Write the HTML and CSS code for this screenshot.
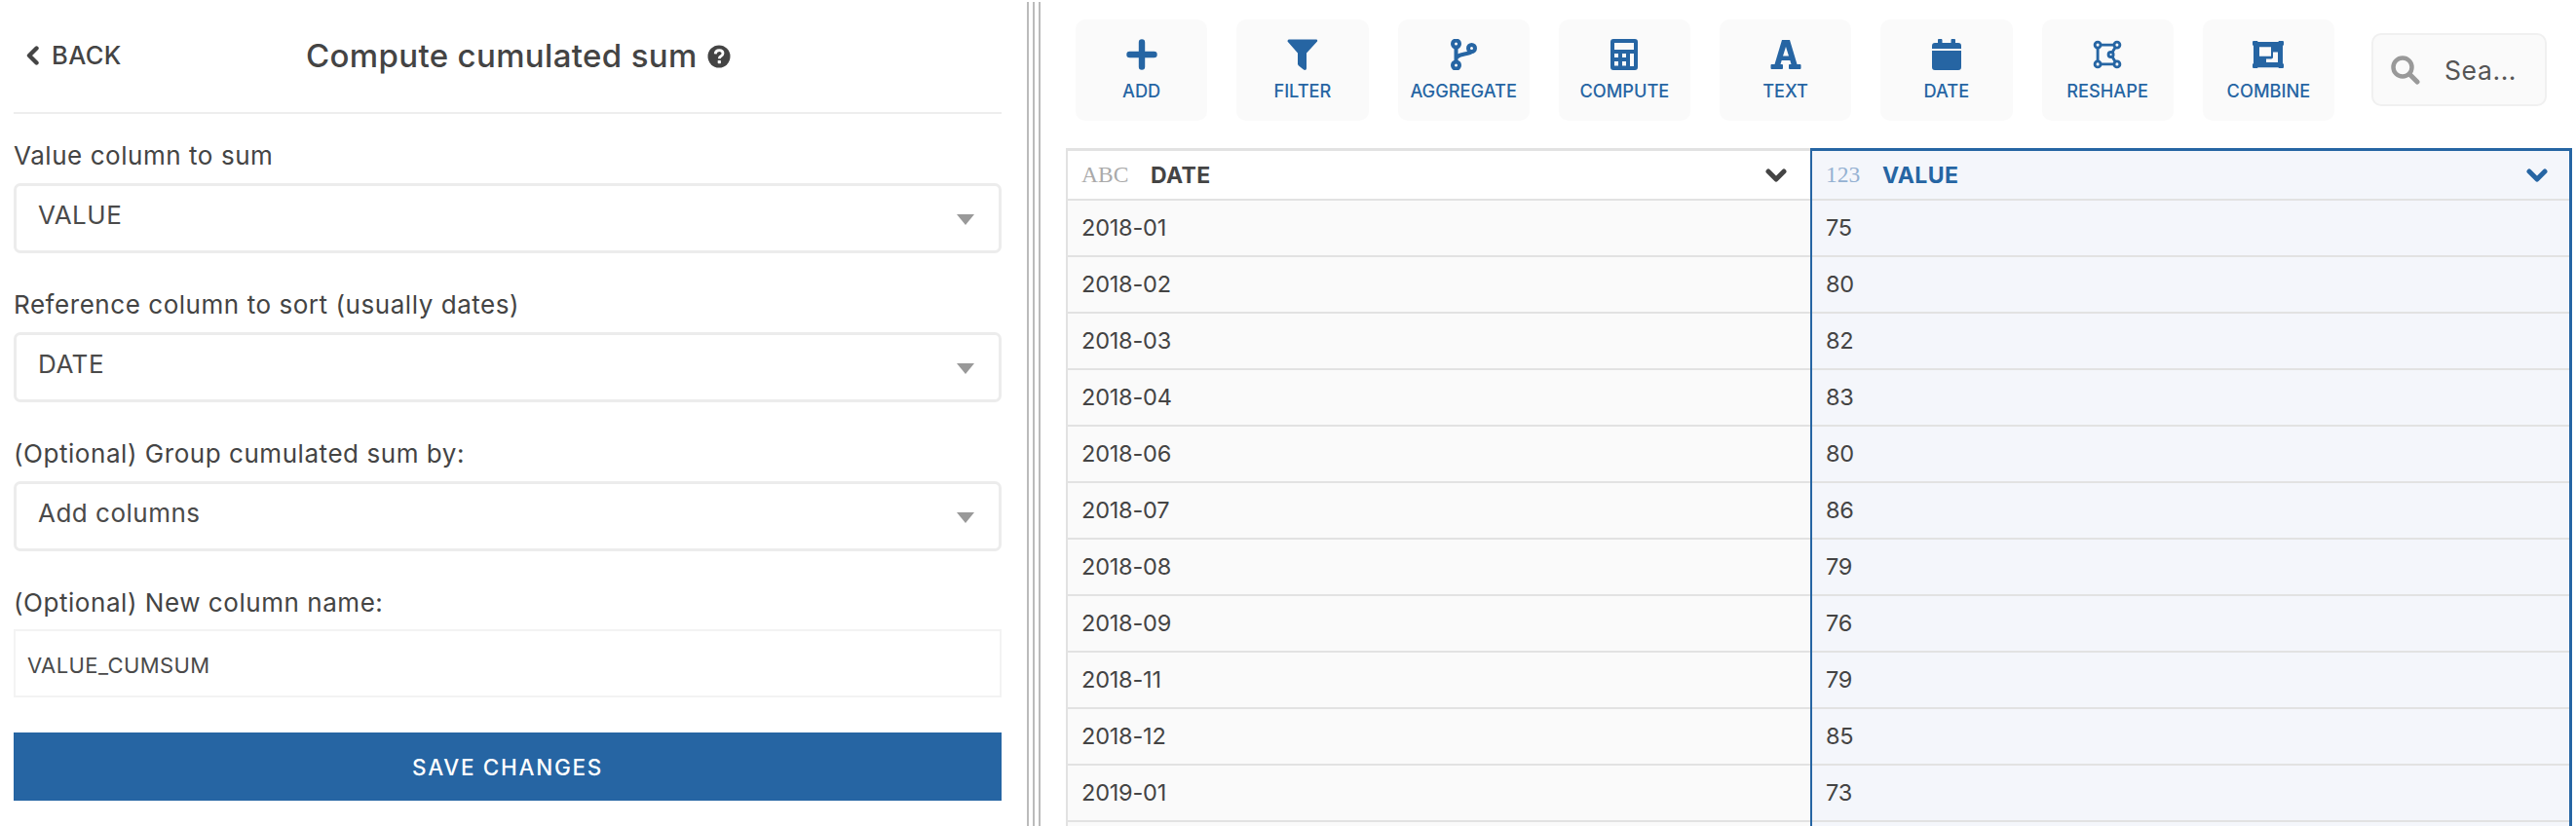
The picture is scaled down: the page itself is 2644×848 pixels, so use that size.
FILE: index.html
```html
<!DOCTYPE html>
<html lang="en">
<head>
<meta charset="utf-8">
<title>Compute cumulated sum</title>
<link rel="stylesheet" href="styles.css">
</head>
<body>
<div class="app">
  <section class="left">
    <header class="head">
      <a class="back">
        <svg class="back-ico" viewBox="0 0 15 20"><path d="M11.5 2.500 L4 10 L11.5 17.500" fill="none" stroke="#444" stroke-width="4.400" stroke-linecap="round" stroke-linejoin="round"/></svg>
        <span>BACK</span>
      </a>
      <h1 class="title">Compute cumulated sum</h1>
      <svg class="help" viewBox="0 0 24 24"><circle cx="12" cy="12" r="11.5" fill="#444"/><path d="M8.2 9.4 C8.4 6.9 10 5.6 12.2 5.6 C14.5 5.6 16 7 16 8.8 C16 10.4 15 11.1 13.9 11.8 C12.9 12.4 12.3 13 12.3 14.2" fill="none" stroke="#fff" stroke-width="2.8"/><rect x="10.7" y="16" width="3.2" height="3.2" rx=".6" fill="#fff"/></svg>
    </header>
    <div class="field">
      <label class="lbl">Value column to sum</label>
      <div class="sel">VALUE</div>
    </div>
    <div class="field">
      <label class="lbl">Reference column to sort (usually dates)</label>
      <div class="sel">DATE</div>
    </div>
    <div class="field">
      <label class="lbl">(Optional) Group cumulated sum by:</label>
      <div class="sel">Add columns</div>
    </div>
    <div class="field-last">
      <label class="lbl">(Optional) New column name:</label>
      <div class="inp">VALUE_CUMSUM</div>
    </div>
    <button class="save">SAVE CHANGES</button>
  </section>

  <div class="splitter"><i></i></div>

  <section class="right">
    <nav class="toolbar">
      <div class="tools">
        <a class="tool">
          <svg class="ico" viewBox="0 0 32 32"><path d="M16 3.5V28.5M3.5 16H28.500" stroke="#2665a3" stroke-width="6.4" stroke-linecap="round" fill="none"/></svg>
          <span>ADD</span>
        </a>
        <a class="tool">
          <svg class="ico" viewBox="0 0 32 32"><path d="M1 2.500C1 1 1.800 .5 3 .5H30C31.500 .5 32 1.500 31.500 2.500L20.500 14.500V30C20.500 32 18.800 32.500 17.500 31.500L12.500 27.500C11.800 27 11.500 26.300 11.500 25.500V14.500Z" fill="#2665a3" transform="translate(-.5 0)"/></svg>
          <span>FILTER</span>
        </a>
        <a class="tool">
          <svg class="ico" viewBox="0 0 32 32"><g fill="none" stroke="#2665a3" stroke-width="4"><circle cx="8.500" cy="5" r="3.500"/><circle cx="8.500" cy="27" r="3.500"/><circle cx="24.500" cy="9.500" r="3.500"/><path d="M8.500 8.500V23.500M8.500 20C10 16.500 13 16.500 17 15.500C22 14.500 24 14 24.500 13"/></g></svg>
          <span>AGGREGATE</span>
        </a>
        <a class="tool">
          <svg class="ico" viewBox="0 0 32 32"><path fill="#2665a3" fill-rule="evenodd" d="M5 0H27C29 0 30 1 30 3V29C30 31 29 32 27 32H5C3 32 2 31 2 29V3C2 1 3 0 5 0ZM6 4V11H26V4ZM6 15V19H10V15ZM14 15V19H18V15ZM22 15V28H26V15ZM6 23V27.500H10V23ZM14 23V27.500H18V23Z"/></svg>
          <span>COMPUTE</span>
        </a>
        <a class="tool">
          <svg class="ico" viewBox="0 0 32 32"><path fill="#2665a3" fill-rule="evenodd" d="M12 1H20L27.500 26H30.500C31 26 31.500 26.500 31.500 27V30C31.500 30.500 31 31 30.500 31H20C19.500 31 19 30.500 19 30V27C19 26.500 19.500 26 20 26H21.500L20.300 22H11.700L10.500 26H12C12.500 26 13 26.500 13 27V30C13 30.500 12.500 31 12 31H1.500C1 31 .5 30.500 .5 30V27C.5 26.500 1 26 1.500 26H4.500ZM16 8L13 17.500H19Z"/></svg>
          <span>TEXT</span>
        </a>
        <a class="tool">
          <svg class="ico" viewBox="0 0 32 32"><path fill="#2665a3" d="M8 0H10.500C11 0 11.500 .5 11.500 1V4H20.500V1C20.500 .5 21 0 21.500 0H24C24.500 0 25 .5 25 1V4H28C30 4 31 5 31 7V10H1V7C1 5 2 4 4 4H7V1C7 .5 7.500 0 8 0ZM1 12H31V29C31 31 30 32 28 32H4C2 32 1 31 1 29Z"/></svg>
          <span>DATE</span>
        </a>
        <a class="tool">
          <svg class="ico" viewBox="0 0 32 32"><g fill="none" stroke="#2665a3" stroke-width="3.200" transform="translate(1.600 1.600) scale(.9)"><circle cx="5" cy="5" r="3.300"/><circle cx="27" cy="5" r="3.300"/><circle cx="5" cy="27" r="3.300"/><circle cx="27" cy="27" r="3.300"/><circle cx="20" cy="16" r="2.800"/><path d="M8.500 5H23.500M5 8.500V23.500M8.500 27H23.500M25 8L21.500 13.500M21.500 18.500L25 24"/></g></svg>
          <span>RESHAPE</span>
        </a>
        <a class="tool">
          <svg class="ico" viewBox="0 0 32 32"><path fill="#2665a3" fill-rule="evenodd" transform="translate(0 2) scale(1 .875)" d="M0 1.500C0 .5 .5 0 1.500 0H4.500C5 0 5.500 .5 5.500 1H26.500C26.500 .5 27 0 27.500 0H30.500C31.500 0 32 .5 32 1.500V4.500C32 5 31.500 5.500 31 5.500V26.500C31.500 26.500 32 27 32 27.500V30.500C32 31.500 31.500 32 30.500 32H27.500C27 32 26.500 31.500 26.500 31H5.500C5.500 31.500 5 32 4.500 32H1.500C.5 32 0 31.500 0 30.500V27.500C0 27 .5 26.500 1 26.500V5.500C.5 5.500 0 5 0 4.500ZM7 7V18H19V7ZM21 13V19C21 20 20 21 19 21H14V25H26V13Z"/></svg>
          <span>COMBINE</span>
        </a>
      </div>
      <div class="search">
        <svg class="search-ico" viewBox="0 0 30 30"><circle cx="12" cy="12" r="9.500" fill="none" stroke="#999" stroke-width="4.500"/><path d="M19 19L27 27" stroke="#999" stroke-width="5" stroke-linecap="round"/></svg>
        <span>Sea...</span>
      </div>
    </nav>

    <div class="grid">
      <div class="col">
        <div class="th">
          <span class="ty">ABC</span><span class="name">DATE</span>
          <svg class="chev" viewBox="0 0 22 14"><path d="M3 3L11 11L19 3" fill="none" stroke="#444" stroke-width="5" stroke-linecap="round" stroke-linejoin="round"/></svg>
        </div>
        <div class="td">2018-01</div>
        <div class="td">2018-02</div>
        <div class="td">2018-03</div>
        <div class="td">2018-04</div>
        <div class="td">2018-06</div>
        <div class="td">2018-07</div>
        <div class="td">2018-08</div>
        <div class="td">2018-09</div>
        <div class="td">2018-11</div>
        <div class="td">2018-12</div>
        <div class="td">2019-01</div>
        <div class="td"></div>
      </div>
      <div class="col col-on">
        <div class="th">
          <span class="ty">123</span><span class="name">VALUE</span>
          <svg class="chev" viewBox="0 0 22 14"><path d="M3 3L11 11L19 3" fill="none" stroke="#2665a3" stroke-width="5" stroke-linecap="round" stroke-linejoin="round"/></svg>
        </div>
        <div class="td">75</div>
        <div class="td">80</div>
        <div class="td">82</div>
        <div class="td">83</div>
        <div class="td">80</div>
        <div class="td">86</div>
        <div class="td">79</div>
        <div class="td">76</div>
        <div class="td">79</div>
        <div class="td">85</div>
        <div class="td">73</div>
        <div class="td"></div>
      </div>
    </div>
  </section>
</div>
</body>
</html>
```

FILE: styles.css
```css
* { box-sizing: border-box; }
html, body { margin: 0; height: 100%; background: #fff; }
body { font-family: Inter, "Open Sans", sans-serif; color: #444; overflow: hidden; }
.app { display: flex; height: 848px; overflow: hidden; }

.left { width: 1054px; flex: none; padding: 0 26px 0 14px; }
.head { display: flex; align-items: center; height: 117px; padding-bottom: 2px; border-bottom: 2px solid #eee; margin-bottom: 29px; }
.back { display: flex; align-items: center; margin-left: 12px; font-size: 25.500px; font-weight: 500; letter-spacing: .4px; color: #444; width: 114px; }
.back-ico { width: 15px; height: 20px; margin-right: 12px; }
.title { margin: 0 0 0 174px; font-size: 33px; font-weight: 500; letter-spacing: .35px; color: #444; white-space: nowrap; }
.help { width: 24px; height: 24px; margin-left: 10px; margin-top: 2px; }

.field { margin-bottom: 39px; }
.field-last { margin-bottom: 36px; }
.lbl { display: block; height: 28px; line-height: 28px; font-size: 26px; letter-spacing: .55px; color: #444; margin-bottom: 14px; white-space: nowrap; }
.field-last .lbl { margin-bottom: 13px; }
.sel { position: relative; height: 72px; line-height: 60px; padding-left: 22px; border: 3px solid #ececec; border-radius: 7px; font-size: 26px; letter-spacing: .5px; color: #4a4a4a; }
.sel::after { content: ""; position: absolute; right: 25px; top: 29px; border-left: 9px solid transparent; border-right: 9px solid transparent; border-top: 11px solid #999; }
.inp { height: 70px; line-height: 70px; padding-left: 12px; border: 2px solid #f3f3f3; font-size: 22px; letter-spacing: .4px; color: #4a4a4a; }
.save { display: block; width: 100%; height: 70px; border: 0; background: #2665a3; color: #fff; font-family: inherit; font-size: 22.500px; font-weight: 500; letter-spacing: 1.700px; }

.splitter { width: 14px; flex: none; display: flex; justify-content: center; margin-top: 2px; border-left: 2px solid #bbb; border-right: 2px solid #bbb; }
.splitter i { display: block; width: 2px; background: #bbb; }

.right { flex: 1; min-width: 0; padding: 20px 4px 0 26px; }
.toolbar { display: flex; align-items: flex-start; padding-left: 10px; height: 132px; }
.tools { display: flex; gap: 30px; width: 1292px; flex: none; }
.tool { flex: 1; height: 104px; background: #fafafa; border-radius: 10px; display: flex; flex-direction: column; align-items: center; padding-top: 20px; font-size: 18.200px; font-weight: 500; color: #2665a3; white-space: nowrap; }
.ico { width: 32px; height: 32px; flex: none; }
.tool span { margin-top: 9px; line-height: 24px; }
.search { width: 180px; height: 75px; margin: 14px 0 0 38px; background: #fafafa; border: 2px solid #f0f0f0; border-radius: 10px; display: flex; align-items: center; padding-left: 18px; font-size: 26.500px; letter-spacing: .6px; color: #555; }
.search-ico { width: 30px; height: 30px; margin-right: 25px; }

.grid { display: flex; height: 700px; }
.col { width: 764px; flex: none; border-top: 3px solid #e2e2e2; border-left: 2px solid #e2e2e2; }
.col-on { width: 782px; position: relative; border: 3px solid #2665a3; border-bottom: 0; border-left-width: 2px; background: #f4f6fb; }
.th { height: 51px; display: flex; align-items: center; padding-left: 14px; padding-right: 24px; border-bottom: 2px solid #e2e2e2; background: #fff; }
.col-on .th { background: transparent; color: #2665a3; padding-left: 14px; padding-right: 22px; }
.ty { font-family: "Liberation Serif", serif; font-size: 23.500px; color: #aaa; width: 71px; flex: none; }
.col-on .ty { color: #94b1d2; width: 58px; }
.name { font-size: 23px; font-weight: 700; letter-spacing: .4px; }
.chev { width: 22px; height: 14px; margin-left: auto; }
.td { height: 58px; line-height: 56px; padding-left: 14px; border-bottom: 2px solid #e2e2e2; background: #fafafa; font-size: 23.500px; letter-spacing: -.2px; color: #444; }
.col-on .td { background: transparent; }
```
